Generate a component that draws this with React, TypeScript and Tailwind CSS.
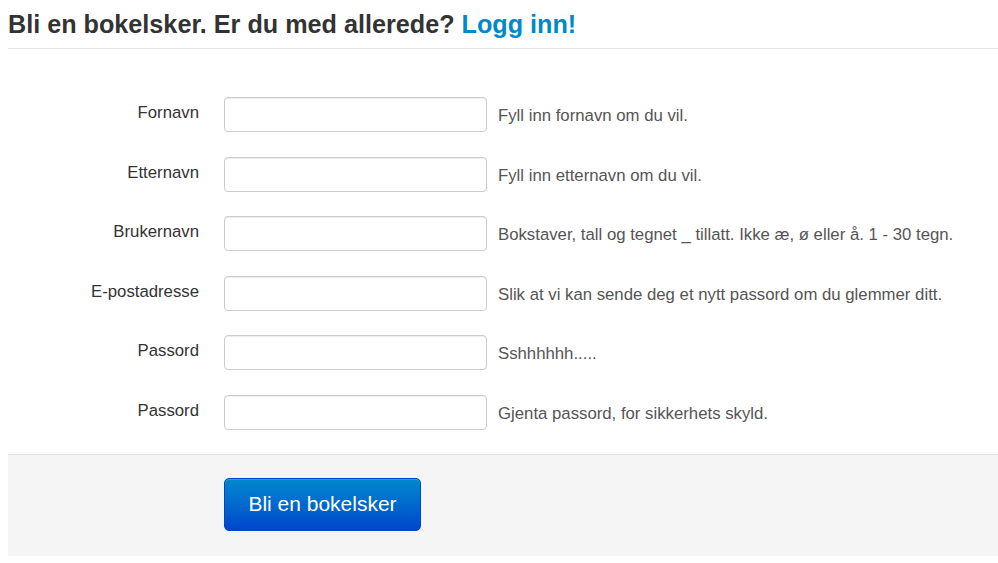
import React from 'react';

const fields = [
  { label: 'Fornavn', help: 'Fyll inn fornavn om du vil.', type: 'text' },
  { label: 'Etternavn', help: 'Fyll inn etternavn om du vil.', type: 'text' },
  { label: 'Brukernavn', help: 'Bokstaver, tall og tegnet _ tillatt. Ikke æ, ø eller å. 1 - 30 tegn.', type: 'text' },
  { label: 'E-postadresse', help: 'Slik at vi kan sende deg et nytt passord om du glemmer ditt.', type: 'email' },
  { label: 'Passord', help: 'Sshhhhhh.....', type: 'password' },
  { label: 'Passord', help: 'Gjenta passord, for sikkerhets skyld.', type: 'password' },
];

export default function App() {
  return (
    <div className="min-h-screen bg-white pl-2 font-['Liberation_Sans',Arial,sans-serif] text-[#333]">
      {/* Header */}
      <h1 className="mt-[4px] border-b border-[#e5e5e5] pb-[4px] text-[25.2px] font-bold leading-[40px]">
        Bli en bokelsker. Er du med allerede? <a href="#" className="text-[#0088cc]">Logg inn!</a>
      </h1>

      <form>
        <div className="flex flex-col gap-[24.5px] pt-[48px]">
          {fields.map((f, i) => (
            <div key={i} className="flex items-start">
              <label className="w-[191px] pt-[6px] text-right text-[16.75px] leading-[20px]">{f.label}</label>
              <input
                type={f.type}
                className="ml-[25px] h-[35px] w-[263px] rounded-[4px] border border-[#ccc] bg-white px-2 shadow-[inset_0_1px_1px_rgba(0,0,0,0.075)] outline-none"
              />
              <span className="ml-[11px] pt-[9px] text-[16.75px] leading-[20px] text-[#555]">{f.help}</span>
            </div>
          ))}
        </div>

        {/* Form actions */}
        <div className="mt-[24px] h-[102px] border-t border-[#e5e5e5] bg-[#f5f5f5] pl-[216px] pt-[23px]">
          <button
            type="button"
            className="h-[53px] w-[197px] rounded-[5px] border border-[#0044cc] bg-gradient-to-b from-[#0088cc] to-[#0044cc] text-[21px] text-white shadow-[inset_0_1px_0_rgba(255,255,255,0.2)]"
          >
            Bli en bokelsker
          </button>
        </div>
      </form>
    </div>
  );
}
